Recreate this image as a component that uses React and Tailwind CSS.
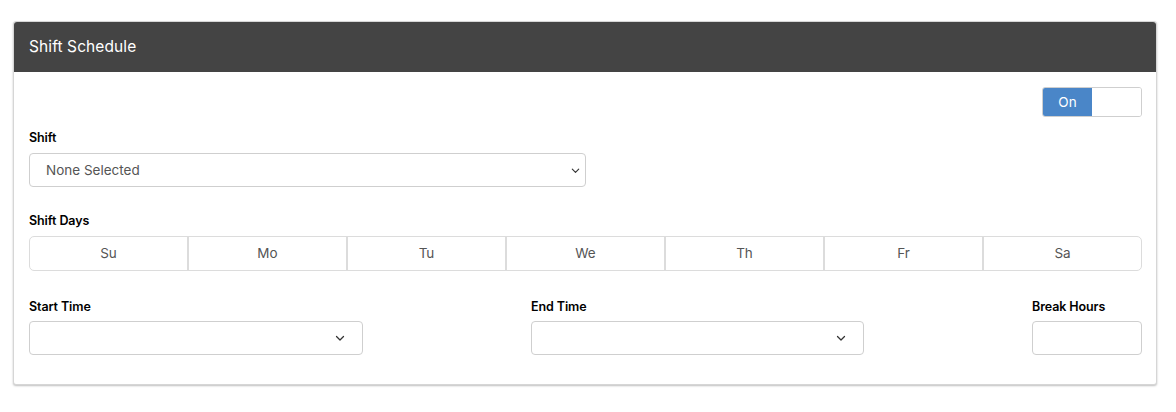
const days = ["Su", "Mo", "Tu", "We", "Th", "Fr", "Sa"];

const Chevron = ({ className }) => (
  <svg className={className} width="12" height="12" viewBox="0 0 24 24" fill="none" stroke="currentColor" strokeWidth="2.5" strokeLinecap="round" strokeLinejoin="round">
    <path d="M5 9l7 7 7-7" />
  </svg>
);

const App = () => {
  return (
    <div className="min-h-[412px] bg-white pt-[21px] px-[13px] font-['Inter','Noto_Sans',sans-serif] text-[#222]">
      <div className="w-[1144px] rounded-[3px] border border-[#d6d6d6] shadow-[0_1px_2px_rgba(0,0,0,0.25)] bg-white">
        <div className="h-[50px] bg-[#444444] rounded-t-[3px] flex items-center px-[15px]">
          <h2 className="text-white text-[15.5px] tracking-[0.1px]">Shift Schedule</h2>
        </div>
        <div className="pl-[15px] pr-[14px] pt-[15px] pb-[29px]">
          <div className="flex justify-end">
            <div className="w-[100px] h-[30px] flex rounded-[3px] border border-[#cfcfcf] overflow-hidden">
              <div className="w-[49px] bg-[#4a86c8] text-white text-[13.5px] flex items-center justify-center">On</div>
              <div className="flex-1 bg-white"></div>
            </div>
          </div>

          <label className="block text-[12.5px] font-semibold text-black mt-[12px] mb-[5px] tracking-[-0.1px]">Shift</label>
          <div className="relative w-[557px] h-[34px] rounded-[4px] border border-[#cfcfcf] flex items-center pl-[16px]">
            <span className="text-[13.5px] text-[#555]">None Selected</span>
            <Chevron className="absolute right-[4px] top-[11px] text-[#333] w-[11px] h-[11px]" />
          </div>

          <label className="block text-[12.5px] font-semibold text-black mt-[25px] mb-[5px] tracking-[-0.1px]">Shift Days</label>
          <div className="flex h-[35px] rounded-[5px] border border-[#dcdcdc] overflow-hidden">
            {days.map((d, i) => (
              <div
                key={d}
                className={`flex-1 flex items-center justify-center text-[13.5px] text-[#555] ${i > 0 ? "border-l-2 border-[#dcdcdc]" : ""}`}
              >
                {d}
              </div>
            ))}
          </div>

          <div className="flex justify-between mt-[27px]">
            <div className="w-[334px]">
              <label className="block text-[12.5px] font-semibold text-black mb-[5px] tracking-[-0.1px]">Start Time</label>
              <div className="h-[34px] rounded-[4px] border border-[#cfcfcf] flex items-center justify-end pr-[16px]">
                <Chevron className="text-[#333]" />
              </div>
            </div>
            <div className="w-[333px]">
              <label className="block text-[12.5px] font-semibold text-black mb-[5px] tracking-[-0.1px]">End Time</label>
              <div className="h-[34px] rounded-[4px] border border-[#cfcfcf] flex items-center justify-end pr-[16px]">
                <Chevron className="text-[#333]" />
              </div>
            </div>
            <div className="w-[110px]">
              <label className="block text-[12.5px] font-semibold text-black mb-[5px] tracking-[-0.1px]">Break Hours</label>
              <div className="h-[34px] rounded-[4px] border border-[#cfcfcf]"></div>
            </div>
          </div>
        </div>
      </div>
    </div>
  );
};

export default App;
